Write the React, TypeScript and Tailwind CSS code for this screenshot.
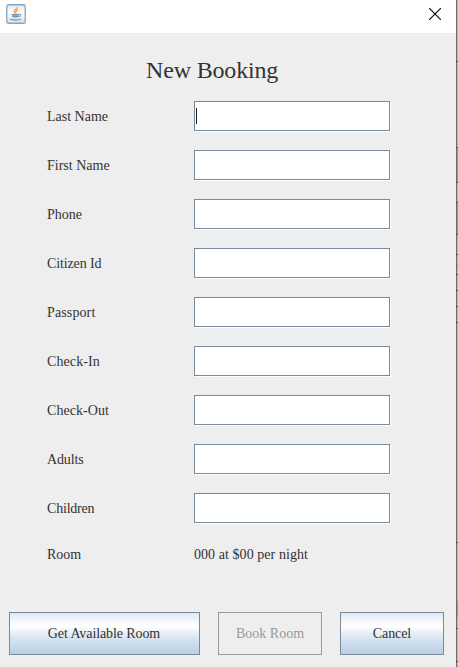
import React from "react";

const fields = [
  { label: "Last Name", tracking: "", focused: true },
  { label: "First Name", tracking: "" },
  { label: "Phone", tracking: "" },
  { label: "Citizen Id", tracking: "tracking-[-0.12px]" },
  { label: "Passport", tracking: "tracking-[0.12px]" },
  { label: "Check-In", tracking: "tracking-[0.1px]" },
  { label: "Check-Out", tracking: "tracking-[0.05px]" },
  { label: "Adults", tracking: "tracking-[-0.15px]" },
  { label: "Children", tracking: "tracking-[-0.2px]" },
];

const ticks = [61, 147, 182, 202, 234, 254, 274, 290, 306, 322, 542, 628, 661];

function JavaIcon() {
  return (
    <svg width="20" height="20" viewBox="0 0 20 20" fill="none">
      <defs>
        <linearGradient id="tile" x1="0" y1="0" x2="0" y2="1">
          <stop offset="0" stopColor="#dfe8f0" />
          <stop offset="0.4" stopColor="#ffffff" />
          <stop offset="1" stopColor="#d9e2ea" />
        </linearGradient>
      </defs>
      <rect x="0.75" y="0.75" width="18.5" height="18.5" rx="1.6" fill="url(#tile)" stroke="#8ba5ba" strokeWidth="1.3" />
      <path d="M11 3.2C11.5 5 8 5.700 8.100 7.400c.1 1 .9 1.400 1.200 2M12.200 5.600c-1.800.8-2.800 1.300-2.400 2.300.3.700.5 1 0 1.800" stroke="#f0a05a" strokeWidth="1.300" />
      <path d="M5.500 9.900h7.700l-.8 3.600H6.700z" fill="#a2b8ca" />
      <path d="M5.600 10.300c1.800.8 5.500.8 7.500.1M6.400 12.300c2 .6 4.400.6 6.200 0M13.200 10.200c2.500-.4 2 1.800-.2 2.500" stroke="#6b8ba8" />
      <path d="M3.800 15c1.500 1.200 9 1.400 11.400 0" stroke="#7f9cb5" strokeWidth="1.400" />
    </svg>
  );
}

function Field({ label, tracking, focused }: { label: string; tracking: string; focused?: boolean }) {
  return (
    <div className="flex h-[30px] items-center">
      <span className={`w-[147px] pt-0.5 ${tracking}`}>{label}</span>
      <div className="flex h-[30px] w-[196px] items-center border border-[#7a8a99] bg-white pl-px shadow-[1px_1px_0_#ffffff]">
        {focused && <span className="mt-[-1px] h-4 w-px bg-[#222222]" />}
      </div>
    </div>
  );
}

export default function App() {
  return (
    <div className="flex h-[667px] w-[458px] overflow-hidden font-['Liberation_Serif',serif] text-[14px] leading-[18px] text-[#333333]">
      <div className="flex w-[456px] flex-col bg-[#eeeeee]">
        <header className="flex h-[33px] items-start justify-between bg-white pt-1 pr-[15px] pl-[6px]">
          <JavaIcon />
          <svg className="mt-1" width="12" height="12" viewBox="0 0 12 12" stroke="#000000" strokeWidth="1.1">
            <path d="M0 0L12 12M12 0L0 12" />
          </svg>
        </header>

        <h1 className="mt-[22px] pl-[146px] text-[24px] leading-[30px] tracking-[-0.17px]">New Booking</h1>

        <div className="mt-4 flex flex-col gap-[19px] pl-[47px]">
          {fields.map((f) => (
            <Field key={f.label} label={f.label} tracking={f.tracking} focused={f.focused} />
          ))}
        </div>
        <div className="mt-[23px] flex pl-[47px]">
          <span className="w-[147px]">Room</span>
          <span className="tracking-[0.06px]">000 at $00 per night</span>
        </div>

        <div className="mt-[48px] flex h-[43px] gap-[18px] pl-[9px]">
          <button className="w-[191px] border border-[#7a8a99] bg-[linear-gradient(#dde8f3_0%,#ffffff_30%,#ffffff_33%,#dce7f1_58%,#b8cfe5_100%)] pr-px tracking-[-0.1px]">Get Available Room</button>
          <button className="w-[104px] border border-[#999999] text-[#999999]" disabled>Book Room</button>
          <button className="w-[104px] border border-[#7a8a99] bg-[linear-gradient(#dde8f3_0%,#ffffff_30%,#ffffff_33%,#dce7f1_58%,#b8cfe5_100%)] tracking-[-0.1px]">Cancel</button>
        </div>
      </div>

      <div className="relative w-[2px] border-l border-[#6c6c6c] bg-[#b8b8b8]">
        <span className="absolute top-[148px] left-0 h-[34px] w-px bg-[#8795a6]" />
        <span className="absolute top-[202px] left-0 h-[32px] w-px bg-[#8795a6]" />
        <span className="absolute top-[264px] left-0 h-[3px] w-px bg-[#b99b62]" />
        <span className="absolute top-[601px] left-0 h-[16px] w-px bg-[#969696]" />
        {ticks.map((y) => (
          <span key={y} className="absolute -left-px h-px w-[2px] bg-[#4c5058]" style={{ top: y }} />
        ))}
      </div>
    </div>
  );
}
